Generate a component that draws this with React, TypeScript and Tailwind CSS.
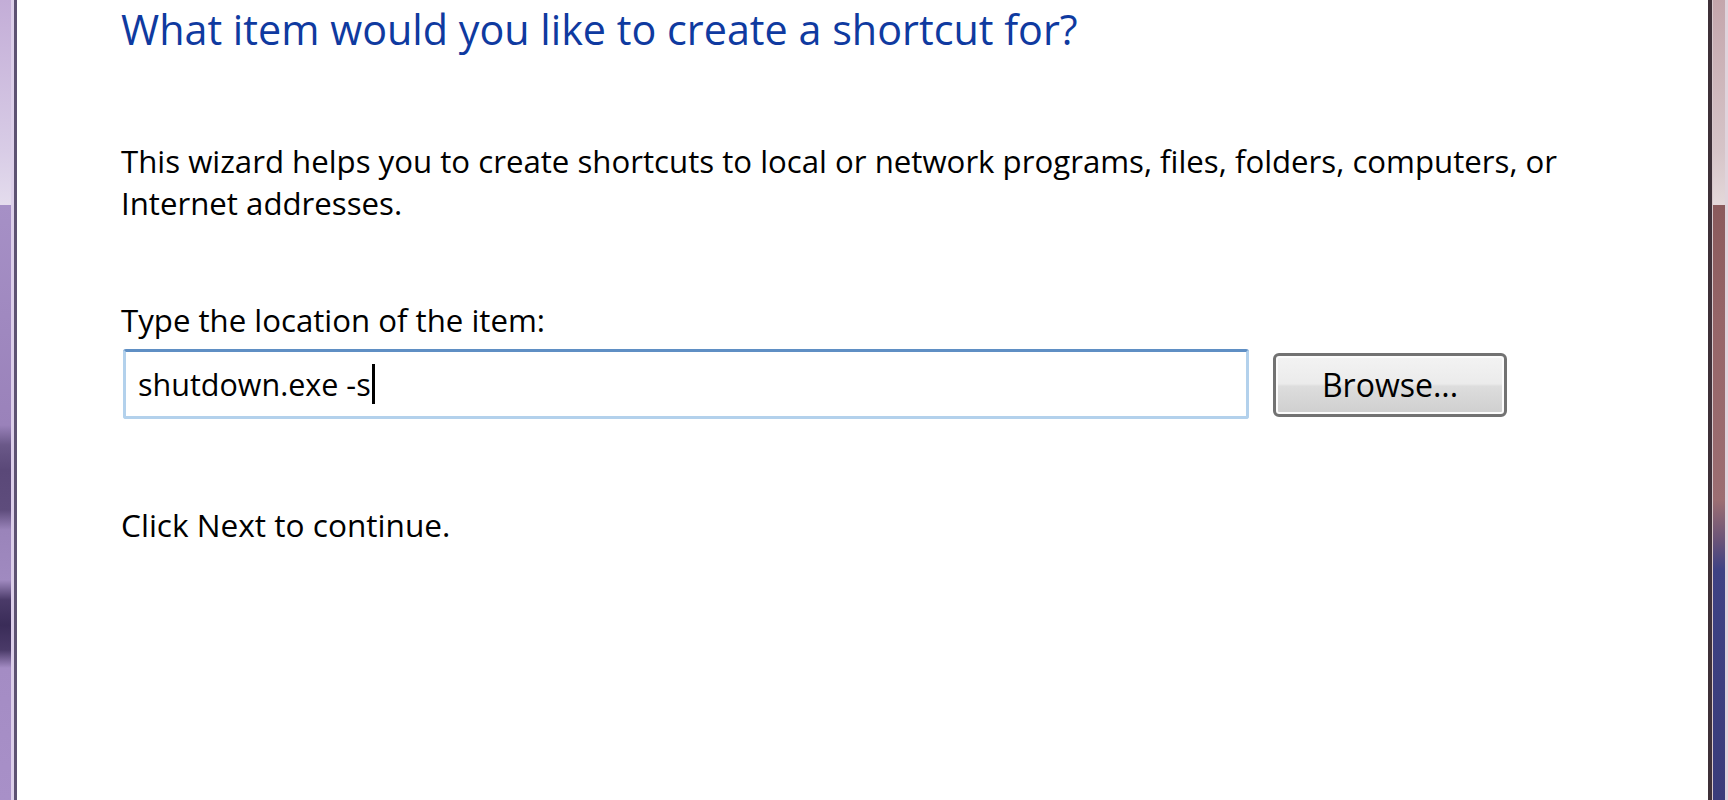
export default function App() {
  return (
    <div className="flex h-[800px] w-[1728px] overflow-hidden bg-white font-['Open_Sans','Noto_Sans',sans-serif]">
      {/* left window frame */}
      <div className="flex h-full shrink-0">
        <div className="h-full w-[11px] bg-[linear-gradient(to_bottom,#c3add7_0px,#d8cce6_150px,#e4dced_205px,#a690c6_205px,#9a82ba_425px,#6a5888_445px,#5a4878_470px,#5e4c7c_510px,#9a84ba_530px,#a08ac0_580px,#4a3a68_600px,#3a2c58_625px,#4a3a68_650px,#a48cc4_668px,#a890c8_800px)]" />
        <div className="h-full w-[3px] bg-[#dccfe9]" />
        <div className="h-full w-[3px] bg-[#5d5272]" />
      </div>

      <main className="flex-1 bg-white pl-[104px] text-black">
        <h1 className="pt-[1px] whitespace-nowrap text-[41.3px] leading-[56px] font-normal text-[#0f3aa0]">
          What item would you like to create a shortcut for?
        </h1>

        <p className="mt-[83px] whitespace-nowrap text-[31.2px] leading-[42px]">
          This wizard helps you to create shortcuts to local or network programs, files, folders, computers, or
          <br />
          Internet addresses.
        </p>

        <p className="mt-[75px] whitespace-nowrap text-[31.2px] leading-[42px]">Type the location of the item:</p>

        <div className="ml-[2px] mt-[8px] flex items-start">
          <div className="relative flex h-[70px] w-[1126px] items-center rounded-[3px] border-[3px] border-[#b3d1ec] border-t-[#5f8fc4] pl-[12px]">
            <span className="text-[30.5px] leading-[42px]">shutdown.exe -s</span>
            <span className="ml-[1px] h-[40px] w-[3px] bg-black" />
          </div>
          <button className="ml-[24px] mt-[4px] h-[64px] w-[234px] rounded-[6px] border-[3px] border-[#727272] bg-[linear-gradient(to_bottom,#f3f3f3_0%,#ebebeb_48%,#dddddd_52%,#cfcfcf_100%)] text-[32px] leading-[42px] shadow-[inset_0_0_0_2px_#fbfbfb]">
            Browse...
          </button>
        </div>

        <p className="mt-[85px] whitespace-nowrap text-[31.6px] leading-[42px]">Click Next to continue.</p>
      </main>

      {/* right window frame */}
      <div className="flex h-full shrink-0">
        <div className="h-full w-[4px] bg-[#3e3038]" />
        <div className="h-full w-[1px] bg-[#d8c8cc]" />
        <div className="h-full w-[12px] bg-[linear-gradient(to_bottom,#c4a6ac_0px,#d6c4c8_150px,#e4d8da_205px,#8a5a5c_205px,#956568_320px,#9c6e72_500px,#6a5478_540px,#3e4284_570px,#3a3c7a_800px)]" />
        <div className="h-full w-[3px] bg-[#e0d4dc]" />
      </div>
    </div>
  )
}
